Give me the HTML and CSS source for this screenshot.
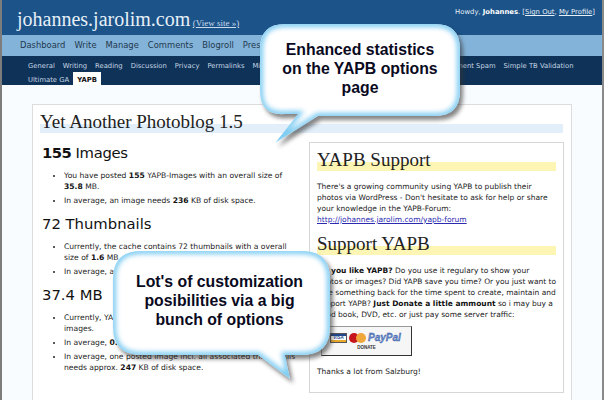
FILE: index.html
```html
<!DOCTYPE html>
<html lang="en">
<head>
<meta charset="utf-8">
<title>YAPB options</title>
<link rel="stylesheet" href="styles.css">
</head>
<body>
<div class="frame">
  <header class="top">
    <div class="brand"><span class="site">johannes.jarolim.com</span> <a class="view">(View site »)</a></div>
    <div class="howdy">Howdy, <b>Johannes</b>. [<a>Sign Out</a>, <a>My Profile</a>]</div>
  </header>
  <nav class="menu">
    <a>Dashboard</a><a>Write</a><a>Manage</a><a>Comments</a><a>Blogroll</a><a>Presentation</a><a>Plugins</a><a>Users</a><a>Options</a>
  </nav>
  <nav class="submenu">
    <div class="subrow">
      <a>General</a><a>Writing</a><a>Reading</a><a>Discussion</a><a>Privacy</a><a>Permalinks</a><a>Miscellaneous</a><a>WP-Cache 2</a><a>Akismet Configuration</a><a>Comment Spam</a><a>Simple TB Validation</a>
    </div>
    <div class="subrow">
      <a>Ultimate GA</a><a class="current">YAPB</a>
    </div>
  </nav>
  <main class="page">
    <section class="card">
      <h2 class="title">Yet Another Photoblog 1.5</h2>
      <div class="columns">
        <div class="stats">
          <h3><b>155</b> Images</h3>
          <ul>
            <li>You have posted <b>155</b> YAPB-Images with an overall size of <b>35.8</b> MB.</li>
            <li>In average, an image needs <b>236</b> KB of disk space.</li>
          </ul>
          <h3>72 Thumbnails</h3>
          <ul>
            <li>Currently, the cache contains 72 thumbnails with a overall size of <b>1.6</b> MB.</li>
            <li>In average, a thumbnail needs <b>22</b> KB of disk space.</li>
          </ul>
          <h3>37.4 MB</h3>
          <ul>
            <li>Currently, YAPB uses 37.4 MB of disk space for all of your images.</li>
            <li>In average, <b>0.4</b> MB are used for one single image.</li>
            <li>In average, one posted image incl. all associated thumbnails needs approx. <b>247</b> KB of disk space.</li>
          </ul>
        </div>
        <aside class="support">
          <h2 class="mark">YAPB Support</h2>
          <p>There's a growing community using YAPB to publish their<br>photos via WordPress - Don't hesitate to ask for help or share<br>your knowledge in the YAPB-Forum:<br><a class="link">http://johannes.jarolim.com/yapb-forum</a></p>
          <h2 class="mark">Support YAPB</h2>
          <p><b>Do you like YAPB?</b> Do you use it regulary to show your<br>photos or images? Did YAPB save you time? Or you just want to<br>give something back for the time spent to create, maintain and<br>support YAPB? <b>Just Donate a little ammount</b> so i may buy a<br>good book, DVD, etc. or just pay some server traffic:</p>
          <div class="donate">
            <div class="cards">
              <span class="visa">VISA</span>
              <span class="mc"><i class="mc-red"></i><i class="mc-orange"></i></span>
              <span class="paypal">PayPal</span>
            </div>
            <div class="donate-label">DONATE</div>
          </div>
          <p class="thanks">Thanks a lot from Salzburg!</p>
        </aside>
      </div>
    </section>
  </main>

  <svg class="defs" width="0" height="0" aria-hidden="true">
    <defs>
      <filter id="soft" x="-20%" y="-20%" width="140%" height="140%"><feGaussianBlur stdDeviation="2.2"/></filter>
      <filter id="glow" x="-20%" y="-20%" width="140%" height="140%"><feGaussianBlur stdDeviation="2.6"/></filter>
      <path id="shape-a" d="M35 4H185Q210 4 210 29V71Q210 96 185 96H68L25 123L48 94H35Q10 96 10 71V29Q10 4 35 4Z"/>
      <path id="shape-b" d="M41 6H202Q230 6 230 34V82Q230 110 202 110H185L190 134L158 110H41Q13 110 13 82V34Q13 6 41 6Z"/>
      <clipPath id="clip-a"><use href="#shape-a"/></clipPath>
      <clipPath id="clip-b"><use href="#shape-b"/></clipPath>
    </defs>
  </svg>

  <div class="bubble bubble-a">
    <svg width="230" height="140" viewBox="0 0 230 140" aria-hidden="true">
      <use href="#shape-a" class="shadow" filter="url(#soft)" transform="translate(3 4)"/>
      <use href="#shape-a" class="fill"/>
      <g clip-path="url(#clip-a)"><use href="#shape-a" class="edge" filter="url(#glow)"/></g>
    </svg>
    <p class="bubble-text">Enhanced statistics<br>on the YAPB options<br>page</p>
  </div>
  <div class="bubble bubble-b">
    <svg width="250" height="145" viewBox="0 0 250 145" aria-hidden="true">
      <use href="#shape-b" class="shadow" filter="url(#soft)" transform="translate(3 4)"/>
      <use href="#shape-b" class="fill"/>
      <g clip-path="url(#clip-b)"><use href="#shape-b" class="edge" filter="url(#glow)"/></g>
    </svg>
    <p class="bubble-text">Lot's of customization<br>posibilities via a big<br>bunch of options</p>
  </div>
</div>
</body>
</html>
```

FILE: styles.css
```css
* { box-sizing: border-box; }
html, body { margin: 0; height: 100%; }
body {
  overflow: hidden;
  background: #f9fcff;
  font-family: "DejaVu Sans", sans-serif;
  font-size: 7.6px;
  line-height: 11px;
  color: #222;
}
.frame {
  position: relative;
  width: 604px;
  height: 400px;
  overflow: hidden;
  border-left: 2px solid #7d7d7d;
  border-right: 2px solid #8a8a8a;
}
.top {
  height: 35px;
  background: #1c5388;
  display: flex;
  justify-content: space-between;
  padding: 7px 7px 0 15px;
  color: #e6f0f8;
}
.site {
  font-family: "Liberation Serif", serif;
  font-size: 20px;
  line-height: 24px;
}
.view {
  font-family: "Liberation Serif", serif;
  font-size: 9px;
  text-decoration: underline;
  color: #c8dcee;
}
.howdy { font-size: 6.85px; line-height: 10px; }
.howdy b { color: #fff; }
.howdy a { text-decoration: underline; }
.menu {
  height: 21px;
  background: #83b3d9;
  display: flex;
  gap: 9px;
  align-items: center;
  padding-left: 18px;
  font-size: 8.4px;
  color: #22384e;
  overflow: hidden;
  white-space: nowrap;
}
.submenu {
  height: 29px;
  background: #0f3358;
  padding: 4px 0 0 26px;
  font-size: 6.8px;
  line-height: 13px;
  color: #c5d5e4;
  white-space: nowrap;
}
.subrow { display: flex; gap: 8px; height: 13px; }
.subrow + .subrow { margin-top: 1px; }
.submenu .current {
  background: #fff;
  color: #111;
  font-weight: 700;
  padding: 2px 4px 0;
  height: 13px;
  margin: -2px 0 0 -4px;
}
.page { padding: 19px 30px 0 30px; }
.card {
  background: #fff;
  border: 1px solid #dcdcdc;
  padding: 8px 8px 0 7px;
  height: 320px;
}
.title, .mark {
  margin: 0;
  padding-bottom: 4px;
  font-family: "Liberation Serif", serif;
  font-weight: 400;
  font-size: 19px;
  line-height: 17px;
  color: #222;
}
.title { background: linear-gradient(transparent 52%, #e2effb 52%, #e2effb 96%, transparent 96%); }
.mark { background: linear-gradient(transparent 52%, #fdf5b4 52%, #fdf5b4 96%, transparent 96%); }
.columns { display: flex; gap: 10px; }
.stats { width: 259px; flex: none; padding: 8px 0 0 2px; }
.stats h3 {
  margin: 0;
  font-size: 14.8px;
  line-height: 22px;
  font-weight: 400;
  color: #111;
}
.stats h3:first-child { letter-spacing: -0.3px; }
.stats h3 b { letter-spacing: -0.6px; }
.stats ul {
  margin: 6px 0 7px;
  padding: 0 0 0 22px;
}
.stats li { margin-bottom: 3px; }
b { color: #111; }
.support {
  width: 255px;
  height: 251px;
  margin-top: 8px;
  border: 1px solid #d6d6d6;
  padding: 8px 7px 0 7px;
}
.support p { margin: 9px 0 0; line-height: 11px; font-size: 7.5px; white-space: nowrap; }
.support p + .mark { margin-top: 10px; }
.link { color: #2b2bb0; text-decoration: underline; }
.donate {
  width: 91px;
  height: 30px;
  margin: 6px 0 0 4px;
  background: #f6f6f6;
  border: 1px solid #999;
  border-right-color: #333;
  border-bottom-color: #333;
  padding: 6px 0 0 8px;
  font-family: "Liberation Sans", sans-serif;
}
.cards { display: flex; align-items: center; gap: 2px; height: 10px; }
.visa {
  width: 17px;
  height: 10px;
  background: linear-gradient(#23478f 25%, #fff 25%, #fff 75%, #e8a92c 75%);
  border: 1px solid #555;
  font-size: 4.5px;
  line-height: 8px;
  font-weight: 700;
  font-style: italic;
  text-align: center;
  color: #23478f;
}
.mc { position: relative; display: block; width: 17px; height: 10px; }
.mc i { position: absolute; top: 0; width: 10px; height: 10px; border-radius: 50%; }
.mc-red { left: 0; background: #c5161d; }
.mc-orange { right: 0; background: #f0a73a; }
.paypal {
  font-size: 10px;
  line-height: 10px;
  font-weight: 700;
  font-style: italic;
  color: #6f8fce;
  -webkit-text-stroke: 0.3px #234a94;
}
.donate-label {
  margin: 2px 0 0 -8px;
  text-align: center;
  font-size: 4.5px;
  line-height: 6px;
  font-weight: 700;
  color: #333;
}
.support .thanks { margin-top: 10px; }
.defs { position: absolute; }
.bubble { position: absolute; }
.bubble svg { display: block; }
.bubble-a { left: 248px; top: 20px; width: 230px; height: 140px; }
.bubble-b { left: 98px; top: 245px; width: 250px; height: 145px; }
.shadow { fill: #333; opacity: .6; }
.fill { fill: #fff; }
.edge { fill: none; stroke: #7ccbf2; stroke-width: 6; }
.bubble-text {
  position: absolute;
  margin: 0;
  font-family: "Liberation Sans", sans-serif;
  font-weight: 700;
  font-size: 15.8px;
  line-height: 19px;
  text-align: center;
  color: #0a0a1e;
}
.bubble-a .bubble-text { left: 10px; width: 200px; top: 20px; }
.bubble-b .bubble-text { left: 11px; width: 217px; top: 27px; }
```
